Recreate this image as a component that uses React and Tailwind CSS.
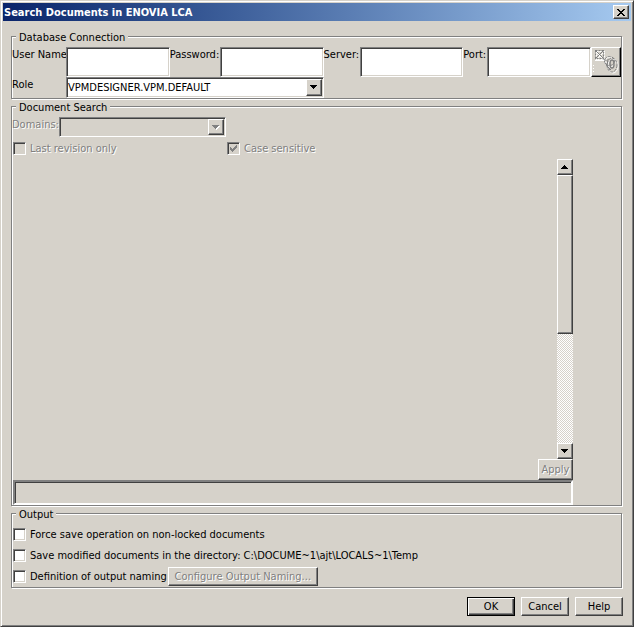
import React from 'react';
import clsx from 'clsx';

const RAISED =
  'border border-t-white border-l-white border-r-[#404040] border-b-[#404040] shadow-[inset_-1px_-1px_0_#808080]';
const SUNKEN =
  'border border-t-[#808080] border-l-[#808080] border-r-white border-b-white shadow-[inset_1px_1px_0_#404040,inset_-1px_-1px_0_#d6d2ca]';
const DISABLED_TEXT = 'text-[#808080] [text-shadow:1px_1px_0_#fff]';

const connectionFields = [
  { id: 'user', label: 'User Name', type: 'text' },
  { id: 'password', label: 'Password:', type: 'password' },
  { id: 'server', label: 'Server:', type: 'text' },
  { id: 'port', label: 'Port:', type: 'text' },
];

const Arrow = ({ up = false, disabled = false }) => (
  <svg width="8" height="5" viewBox="0 0 8 5" shapeRendering="crispEdges" aria-hidden="true">
    {disabled && <path d="M1 1h7v1h-1v1h-1v1h-1v1h-1v-1h-1v-1h-1v-1h-1z" fill="#fff" />}
    <path
      d={up ? 'M3 0h1v1h1v1h1v1h1v1h-7v-1h1v-1h1v-1h1z' : 'M0 0h7v1h-1v1h-1v1h-1v1h-1v-1h-1v-1h-1v-1h-1z'}
      fill={disabled ? '#808080' : '#000'}
    />
  </svg>
);

const ConnectIcon = () => (
  <svg width="28" height="28" viewBox="0 0 28 28" fill="none" aria-hidden="true">
    <g stroke="#fff">
      <path d="M4 4l8 8M13 3l-9 9" />
      <path d="M4.500 3.500h8v8h-8z" strokeDasharray="2 1" />
      <path d="M3 12.500h10M12 14.500h3" />
      <path d="M1.500 17v8" strokeDasharray="1 2" />
      <ellipse cx="18" cy="14" rx="5" ry="5" />
      <ellipse cx="21" cy="18" rx="5" ry="7" />
    </g>
    <g stroke="#808080">
      <path d="M3.500 2.500h8v8h-8z" strokeDasharray="2 1" />
      <path d="M3 2l9 9M12 2l-9 9" />
      <path d="M11.500 11.500l3 1" />
      <ellipse cx="17.500" cy="13" rx="5" ry="4.500" strokeDasharray="3 1" />
      <ellipse cx="20" cy="17" rx="5" ry="7" strokeDasharray="3 1" />
      <ellipse cx="20" cy="16" rx="2" ry="4" strokeWidth="1.500" />
      <path d="M13 15l3 4 2 3M16 11l-1 7 4 4" />
    </g>
  </svg>
);

const Group = ({ id, title, className, children }) => (
  <section
    role="group"
    aria-labelledby={id}
    className={clsx(
      'mt-[6px] mr-px flex flex-col border border-[#808080] shadow-[inset_1px_1px_0_#fff,1px_1px_0_#fff]',
      className
    )}
  >
    <h2 id={id} className="-mt-[7px] mb-1 ml-1 h-[13px] self-start bg-[#d6d2ca] px-[3px] leading-[15px]">
      {title}
    </h2>
    {children}
  </section>
);

const Combo = ({ id, value, disabled = false, className }) => (
  <div className={clsx('relative', className)}>
    <select
      id={id}
      disabled={disabled}
      className={clsx(
        'block h-full w-full appearance-none rounded-none pl-px pr-4 opacity-100 outline-none',
        disabled ? 'bg-[#d6d2ca]' : 'bg-white',
        SUNKEN
      )}
    >
      <option>{value}</option>
    </select>
    <span
      className={clsx(
        'pointer-events-none absolute inset-y-[2px] right-[2px] flex w-4 items-center justify-center bg-[#d6d2ca]',
        RAISED
      )}
    >
      <Arrow disabled={disabled} />
    </span>
  </div>
);

const Check = ({ id, label, disabled = false, checked = false }) => (
  <div className="flex items-center gap-1">
    <span className="relative size-[13px]">
      <input
        id={id}
        type="checkbox"
        disabled={disabled}
        defaultChecked={checked}
        className={clsx('peer block size-[13px] appearance-none', disabled ? 'bg-[#d6d2ca]' : 'bg-white', SUNKEN)}
      />
      <svg
        viewBox="0 0 13 13"
        shapeRendering="crispEdges"
        className={clsx(
          'pointer-events-none absolute inset-0 hidden size-[13px] peer-checked:block',
          disabled ? 'fill-[#808080]' : 'fill-black'
        )}
      >
        <path d="M3 5h1v1h1v1h1v-1h1v-1h1v-1h1v-1h1v3h-1v1h-1v1h-1v1h-1v1h-1v-1h-1v-1h-1z" />
      </svg>
    </span>
    <label htmlFor={id} className={clsx(disabled && DISABLED_TEXT)}>
      {label}
    </label>
  </div>
);

const PushButton = ({ className, children, ...props }) => (
  <button
    type="button"
    className={clsx('flex items-center justify-center bg-[#d6d2ca] whitespace-nowrap', RAISED, className)}
    {...props}
  >
    {children}
  </button>
);

const TitleBar = () => (
  <header className="flex h-[18px] items-center justify-between bg-linear-to-r from-[#0a246a] to-[#a6caf0] pr-[2px] pl-px">
    <h1 className="font-bold text-white">Search Documents in ENOVIA LCA</h1>
    <PushButton className="h-[14px] w-4" aria-label="Close">
      <svg width="8" height="7" viewBox="0 0 8 7" shapeRendering="crispEdges" aria-hidden="true">
        <path d="M0 0h2v1h1v1h2v-1h1v-1h2v1h-1v1h-1v1h-1v1h1v1h1v1h1v1h-2v-1h-1v-1h-2v1h-1v1h-2v-1h1v-1h1v-1h1v-1h-1v-1h-1v-1h-1z" />
      </svg>
    </PushButton>
  </header>
);

const App = () => {
  return (
    <div className="flex min-h-screen flex-col border border-t-[#d6d2ca] border-l-[#d6d2ca] border-r-[#404040] border-b-[#404040] bg-[#d6d2ca] p-[2px] font-['DejaVu_Sans_Condensed','DejaVu_Sans',sans-serif] text-[11px] leading-[13px] text-black shadow-[inset_1px_1px_0_#fff,inset_-1px_-1px_0_#808080]">
      <TitleBar />

      <main className="flex flex-1 flex-col gap-px px-2 pt-[9px] pb-2">
        <Group id="database-connection" title="Database Connection">
          <div className="grid grid-cols-[54px_1fr_50px_1fr_36px_1fr_24px_1fr_30px] grid-rows-[30px_21px]">
            {connectionFields.map(({ id, label, type }) => (
              <React.Fragment key={id}>
                <label htmlFor={id} className="pt-px whitespace-nowrap">
                  {label}
                </label>
                <input id={id} type={type} className={clsx('w-full min-w-0 bg-white px-1 outline-none', SUNKEN)} />
              </React.Fragment>
            ))}
            <button
              type="button"
              disabled
              aria-label="Connect"
              className="border border-t-white border-l-white border-r-black border-b-black shadow-[inset_-1px_-1px_0_#808080]"
            >
              <ConnectIcon />
            </button>
            <label htmlFor="role" className="pt-px">
              Role
            </label>
            <Combo id="role" value="VPMDESIGNER.VPM.DEFAULT" className="col-span-3" />
          </div>
        </Group>

        <Group id="document-search" title="Document Search" className="flex-1">
          <div className="flex h-5">
            <label htmlFor="domains" className={clsx('w-[47px] pt-px whitespace-nowrap', DISABLED_TEXT)}>
              Domains:
            </label>
            <Combo id="domains" value="" disabled className="w-[167px]" />
          </div>
          <div className="grid grid-cols-[214px_1fr] px-px pt-[5px] pb-1">
            <Check id="last-revision" label="Last revision only" disabled />
            <Check id="case-sensitive" label="Case sensitive" disabled checked />
          </div>

          <div className="mr-12 ml-px flex flex-1 flex-col">
            <div className="flex min-h-40 flex-1 justify-end">
              <div className="flex w-4 flex-col bg-[repeating-conic-gradient(#fff_0_25%,#d6d2ca_0_50%)] bg-size-[2px_2px]">
                <PushButton className="h-4" aria-label="Scroll up">
                  <Arrow up />
                </PushButton>
                <div className="flex flex-1 flex-col">
                  <div className={clsx('flex-[59] bg-[#d6d2ca]', RAISED)} />
                  <div className="flex-[41]" />
                </div>
                <PushButton className="h-4" aria-label="Scroll down">
                  <Arrow />
                </PushButton>
              </div>
            </div>
            <PushButton disabled className={clsx('h-[21px] w-[35px] self-end', DISABLED_TEXT)}>
              Apply
            </PushButton>
            <div className="h-[25px] border-2 border-t-[#808080] border-l-[#808080] border-r-white border-b-white shadow-[inset_1px_1px_0_#404040]" />
          </div>
        </Group>

        <Group id="output" title="Output">
          <div className="flex flex-col px-px">
            <div className="flex h-[21px] items-center">
              <Check id="force-save" label="Force save operation on non-locked documents" />
            </div>
            <div className="flex h-[21px] items-center">
              <Check id="save-modified" label="Save modified documents in the directory: C:\DOCUME~1\ajt\LOCALS~1\Temp" />
            </div>
            <div className="flex h-[21px] items-center gap-px">
              <Check id="output-naming" label="Definition of output naming" />
              <PushButton disabled className={clsx('h-[19px] w-[150px]', DISABLED_TEXT)}>
                Configure Output Naming...
              </PushButton>
            </div>
          </div>
        </Group>

        <footer className="flex justify-end gap-[6px] pt-2">
          <button
            type="button"
            className="h-[19px] w-12 border border-black shadow-[inset_1px_1px_0_#fff,inset_-1px_-1px_0_#404040,inset_-2px_-2px_0_#808080]"
          >
            OK
          </button>
          <PushButton className="h-[19px] w-12">Cancel</PushButton>
          <PushButton className="h-[19px] w-12">Help</PushButton>
        </footer>
      </main>
    </div>
  );
};

export default App;
